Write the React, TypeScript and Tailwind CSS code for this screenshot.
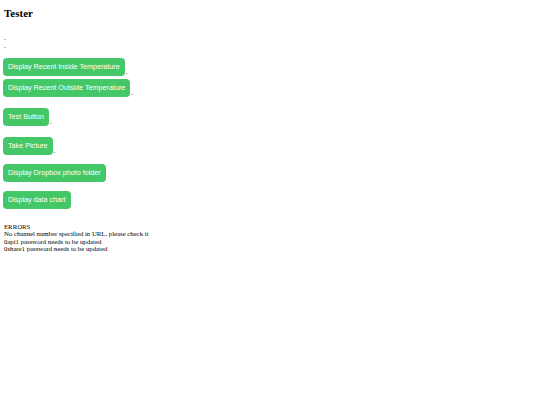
import React from "react";

const serif = { fontFamily: '"Liberation Serif", "Times New Roman", serif' };

function Btn({ label, dot, mt }: { label: string; dot?: boolean; mt: string }) {
  return (
    <div className={`flex items-end ${mt}`}>
      <div className="h-[18px] px-[5px] flex items-center rounded-[4px] bg-[#44c767] text-white text-[7.2px] leading-none font-['Liberation_Sans',Arial,sans-serif]">
        {label}
      </div>
      {dot && <span className="text-[7px] leading-[8px] text-black ml-px" style={serif}>.</span>}
    </div>
  );
}

export default function App() {
  return (
    <div className="w-[540px] h-[405px] bg-white text-black flex flex-col pl-[3px]" style={serif}>
      <div className="mt-[7px] ml-px text-[11px] leading-[13px] font-bold">Tester</div>
      <div className="mt-[14px] ml-px text-[7px] leading-[8px]">.</div>
      <div className="ml-px text-[7px] leading-[8px]">.</div>
      <Btn label="Display Recent Inside Temperature" dot mt="mt-[8px]" />
      <Btn label="Display Recent Outside Temperature" dot mt="mt-[3px]" />
      <Btn label="Test Button" dot mt="mt-[11px]" />
      <Btn label="Take Picture" dot mt="mt-[11px]" />
      <Btn label="Display Dropbox photo folder" mt="mt-[9px]" />
      <Btn label="Display data chart" mt="mt-[9px]" />
      <div className="mt-[14px] ml-px text-[6.75px] leading-[7.3px]">
        <div>ERRORS</div>
        <div>No channel number specified in URL, please check it</div>
        <div>0api1 password needs to be updated</div>
        <div>0share1 password needs to be updated</div>
      </div>
    </div>
  );
}
